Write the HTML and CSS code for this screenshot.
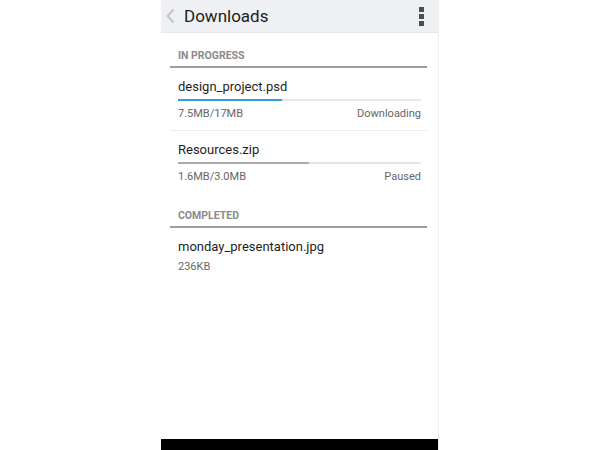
FILE: index.html
```html
<!DOCTYPE html>
<html>

<head>
    <meta charset="utf-8">
    <title>Downloads</title>
    <link rel="stylesheet" href="styles.css">
</head>

<body>
    <div class="phone">

        <div class="topbar">
            <svg class="back" width="10" height="16" viewBox="0 0 10 16">
                <polyline points="7.5,1.5 1.5,8 7.5,14.5" fill="none" stroke="#c3c4c7" stroke-width="2" />
            </svg>
            <span class="title">Downloads</span>
            <div class="menu">
                <i></i><i></i><i></i>
            </div>
        </div>

        <div class="content">
            <div class="section-title">IN PROGRESS</div>
            <ul class="list">
                <li class="item">
                    <div class="name">design_project.psd</div>
                    <div class="bar"><div class="fill active" style="width: 43%"></div></div>
                    <div class="meta"><span>7.5MB/17MB</span><span>Downloading</span></div>
                </li>
                <li class="item">
                    <div class="name">Resources.zip</div>
                    <div class="bar"><div class="fill" style="width: 54%"></div></div>
                    <div class="meta"><span>1.6MB/3.0MB</span><span>Paused</span></div>
                </li>
            </ul>

            <div class="section-title">COMPLETED</div>
            <ul class="list">
                <li class="item done">
                    <div class="name">monday_presentation.jpg</div>
                    <div class="meta"><span>236KB</span></div>
                </li>
            </ul>
        </div>

        <div class="navbar"></div>
    </div>
</body>

</html>
```

FILE: styles.css
```css
html,
body {
    padding: 0;
    margin: 0;
    height: 100%;
    background: #fff;
}

body {
    font-family: Roboto, "Liberation Sans", sans-serif;
    color: #222;
}

.phone {
    width: 278px;
    height: 450px;
    margin: 0 auto;
    box-sizing: border-box;
    border-right: 1px solid #f0f0f0;
    display: flex;
    flex-direction: column;
}

.topbar {
    height: 33px;
    flex: none;
    background: #eff0f4;
    border-bottom: 1px solid #e6e7ea;
    box-sizing: border-box;
    display: flex;
    align-items: center;
    padding: 0 14px 0 5px;
}

.back {
    display: block;
}

.title {
    font-size: 17px;
    margin-left: 8px;
    color: #1c1c1c;
    flex: 1;
}

.menu {
    display: flex;
    flex-direction: column;
    gap: 2px;
    margin-top: 1px;
}

.menu i {
    display: block;
    width: 5px;
    height: 5px;
    background: #4d4d4d;
}

.content {
    flex: 1;
}

.section-title {
    margin: 15px 11px 0 9px;
    padding: 1px 8px 3px;
    line-height: 14px;
    font-size: 10.5px;
    font-weight: bold;
    color: #8a8a8a;
    border-bottom: 2px solid #9c9c9c;
}

.list {
    list-style: none;
    margin: 0 11px 0 9px;
    padding: 0;
}

.item {
    padding: 10px 6px 9px 8px;
    border-bottom: 1px solid #ededed;
}

.item:last-child {
    border-bottom: none;
}

.name {
    font-size: 13px;
    line-height: 18px;
    color: #1e1e1e;
}

.bar {
    height: 2px;
    margin-top: 3px;
    background: #e6e6e6;
}

.fill {
    height: 100%;
    background: #ababab;
}

.fill.active {
    background: #2e9fd8;
}

.meta {
    display: flex;
    justify-content: space-between;
    margin-top: 6px;
    font-size: 11px;
    line-height: 14px;
    color: #666;
}

.done .meta {
    margin-top: 4px;
}

.navbar {
    height: 11px;
    flex: none;
    background: #000;
}
```
